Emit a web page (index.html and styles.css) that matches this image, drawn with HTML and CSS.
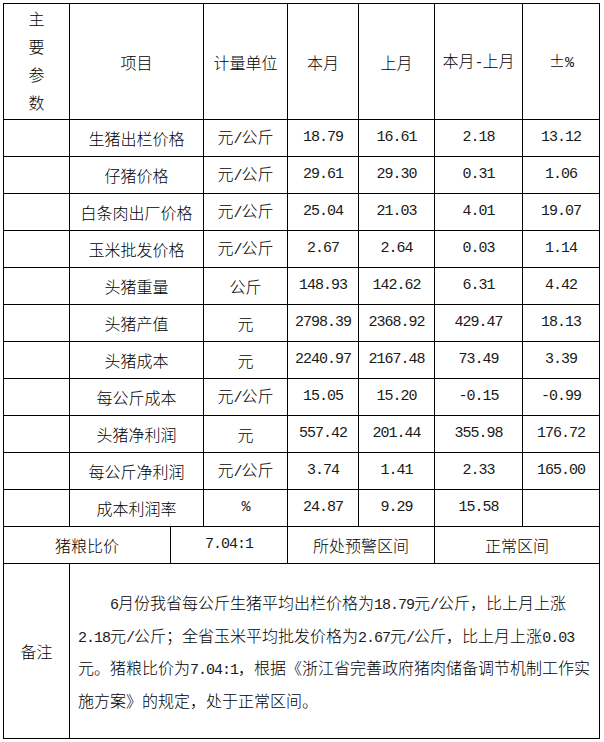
FILE: index.html
```html
<!DOCTYPE html>
<html lang="zh-CN">
<head>
<meta charset="utf-8">
<title>主要参数</title>
<link rel="stylesheet" href="styles.css">
</head>
<body>
<table class="sheet">
  <colgroup>
    <col class="c1"><col class="c2"><col class="c3"><col class="c4"><col class="c5"><col class="c6"><col class="c7"><col class="c8">
  </colgroup>
  <tr class="head">
    <td class="vert">主<br>要<br>参<br>数</td>
    <td colspan="2">项目</td>
    <td>计量单位</td>
    <td>本月</td>
    <td>上月</td>
    <td>本月<span class="a">-</span>上月</td>
    <td>±<span class="a">%</span></td>
  </tr>
  <tr class="row"><td></td><td colspan="2">生猪出栏价格</td><td>元<span class="a">/</span>公斤</td><td class="num">18.79</td><td class="num">16.61</td><td class="num">2.18</td><td class="num">13.12</td></tr>
  <tr class="row"><td></td><td colspan="2">仔猪价格</td><td>元<span class="a">/</span>公斤</td><td class="num">29.61</td><td class="num">29.30</td><td class="num">0.31</td><td class="num">1.06</td></tr>
  <tr class="row"><td></td><td colspan="2">白条肉出厂价格</td><td>元<span class="a">/</span>公斤</td><td class="num">25.04</td><td class="num">21.03</td><td class="num">4.01</td><td class="num">19.07</td></tr>
  <tr class="row"><td></td><td colspan="2">玉米批发价格</td><td>元<span class="a">/</span>公斤</td><td class="num">2.67</td><td class="num">2.64</td><td class="num">0.03</td><td class="num">1.14</td></tr>
  <tr class="row"><td></td><td colspan="2">头猪重量</td><td>公斤</td><td class="num">148.93</td><td class="num">142.62</td><td class="num">6.31</td><td class="num">4.42</td></tr>
  <tr class="row"><td></td><td colspan="2">头猪产值</td><td>元</td><td class="num">2798.39</td><td class="num">2368.92</td><td class="num">429.47</td><td class="num">18.13</td></tr>
  <tr class="row"><td></td><td colspan="2">头猪成本</td><td>元</td><td class="num">2240.97</td><td class="num">2167.48</td><td class="num">73.49</td><td class="num">3.39</td></tr>
  <tr class="row"><td></td><td colspan="2">每公斤成本</td><td>元<span class="a">/</span>公斤</td><td class="num">15.05</td><td class="num">15.20</td><td class="num">-0.15</td><td class="num">-0.99</td></tr>
  <tr class="row"><td></td><td colspan="2">头猪净利润</td><td>元</td><td class="num">557.42</td><td class="num">201.44</td><td class="num">355.98</td><td class="num">176.72</td></tr>
  <tr class="row"><td></td><td colspan="2">每公斤净利润</td><td>元<span class="a">/</span>公斤</td><td class="num">3.74</td><td class="num">1.41</td><td class="num">2.33</td><td class="num">165.00</td></tr>
  <tr class="row"><td></td><td colspan="2">成本利润率</td><td class="num">%</td><td class="num">24.87</td><td class="num">9.29</td><td class="num">15.58</td><td></td></tr>
  <tr class="row">
    <td colspan="2">猪粮比价</td>
    <td colspan="2" class="num">7.04:1</td>
    <td colspan="2">所处预警区间</td>
    <td colspan="2">正常区间</td>
  </tr>
  <tr class="note-row">
    <td>备注</td>
    <td colspan="7" class="note">
      <div class="para"><span class="indent"><span class="a">6</span>月份我省每公斤生猪平均出栏价格为<span class="a">18.79</span>元<span class="a">/</span>公斤，比上月上涨</span><br><span class="a">2.18</span>元<span class="a">/</span>公斤；全省玉米平均批发价格为<span class="a">2.67</span>元<span class="a">/</span>公斤，比上月上涨<span class="a">0.03</span><br>元。猪粮比价为<span class="a">7.04:1</span>，根据《浙江省完善政府猪肉储备调节机制工作实<br>施方案》的规定，处于正常区间。</div>
    </td>
  </tr>
</table>
</body>
</html>
```

FILE: styles.css
```css
html, body {
  margin: 0;
  background: #fff;
}
body {
  font-family: "Noto Sans CJK SC", sans-serif;
  font-size: 16px;
  font-weight: 300;
  color: #000;
}
.sheet {
  border-collapse: collapse;
  table-layout: fixed;
  width: 597px;
  margin: 3px 0 0 3px;
}
.c1 { width: 66px; }
.c2 { width: 101px; }
.c3 { width: 33px; }
.c4 { width: 84px; }
.c5 { width: 71px; }
.c6 { width: 76px; }
.c7 { width: 88px; }
.c8 { width: 77px; }
.sheet td {
  border: 1px solid #000;
  padding: 0;
  text-align: center;
  vertical-align: middle;
  line-height: 20px;
  white-space: nowrap;
}
.head { height: 116px; }
.row { height: 37px; }
.note-row { height: 175px; }
.sheet td.vert {
  line-height: 28px;
  padding-bottom: 3px;
}
.num, .a {
  font-family: "Liberation Mono", monospace;
  font-size: 15px;
  font-weight: 400;
  letter-spacing: -1px;
  color: #1a1a1a;
}
.sheet td.note {
  text-align: left;
  padding-left: 8px;
}
.para {
  line-height: 28.5px;
}
.indent {
  padding-left: 32px;
}
```
